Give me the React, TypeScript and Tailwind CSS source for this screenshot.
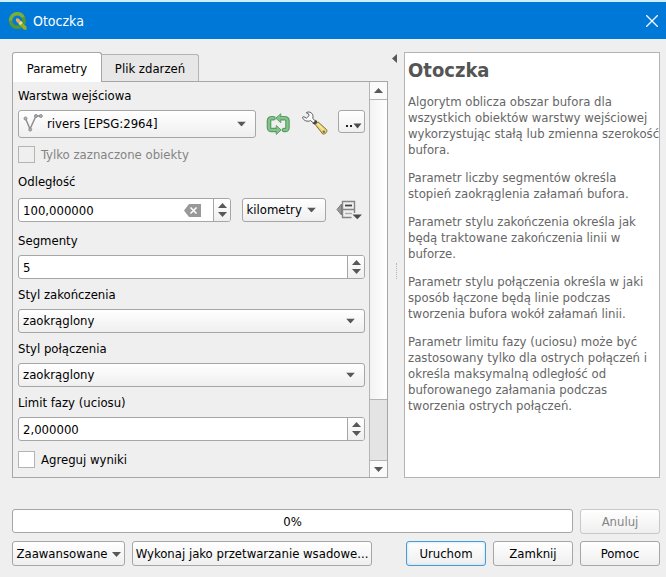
import { useState, type ReactNode } from "react";

function Triangle({ dir = "down", className = "" }: { dir?: "down" | "up" | "left"; className?: string }) {
  const points = { down: "0,0 9,0 4.5,5", up: "0,5 9,5 4.5,0", left: "5,0 5,9 0,4.5" }[dir];
  return (
    <svg
      viewBox={dir === "left" ? "0 0 5 9" : "0 0 9 5"}
      className={`fill-[#585858] ${dir === "left" ? "h-[9px] w-[5px]" : "h-[5px] w-[9px]"} ${className}`}
      aria-hidden="true"
    >
      <polygon points={points} />
    </svg>
  );
}

function QgisLogo() {
  return (
    <svg viewBox="0 0 20 20" className="size-5" aria-hidden="true">
      <circle cx="9.3" cy="9.5" r="6.8" fill="none" stroke="#589632" strokeWidth="3.6" />
      <path d="M2.5 9.5a6.8 6.8 0 0 1 6.8-6.8 6.8 6.8 0 0 1 6 3.6" fill="none" stroke="#7aae3c" strokeWidth="3.2" />
      <path d="M10.5 10.5h3.2l5.2 5.3v3.3h-3l-5.4-5.6z" fill="#93b023" stroke="#0078d7" strokeWidth=".6" />
      <path d="M8 7.6h2.6l2 2.2-2.5 2.4-2.1-2.2z" fill="#f0a85a" />
      <path d="m10.3 12.2 2.5-2.4 2 2-2.4 2.4z" fill="#e9e08a" />
    </svg>
  );
}

function LineLayerIcon() {
  return (
    <svg viewBox="0 0 20 18" className="h-[18px] w-5" fill="#b0b0b0" stroke="#8e8e8e" aria-hidden="true">
      <path d="M2.5 4.5 7 15l6-13h4.5" fill="none" strokeWidth="1.5" />
      <circle cx="2.5" cy="4.5" r="1.5" />
      <circle cx="7.2" cy="15.5" r="1.5" />
      <circle cx="13" cy="2" r="1.5" />
      <circle cx="17.8" cy="2" r="1.5" />
    </svg>
  );
}

function IterateIcon() {
  const d = "M7.5 5.2H5.500a2.500 2.500 0 0 0-2.500 2.500v7a2.300 2.300 0 0 0 2.300 2.300h6M14.500 5.200h4.500a2.500 2.500 0 0 1 2.500 2.500v7a2.300 2.300 0 0 1-2.300 2.300H18";
  return (
    <svg viewBox="0 0 25 22" className="h-[22px] w-[25px]" fill="none" strokeLinecap="round" aria-hidden="true">
      <path d={d} stroke="#5a9e64" strokeWidth="4.6" />
      <path d="m14.500 1-4.700 4.200 4.700 4.200z" fill="#84c48c" stroke="#5a9e64" />
      <path d="m10.500 12.800 4.700 4.200-4.700 4.200z" fill="#84c48c" stroke="#5a9e64" />
      <path d={d} stroke="#84c48c" strokeWidth="2.2" />
    </svg>
  );
}

function WrenchIcon() {
  return (
    <svg viewBox="0 0 27 26" className="h-[26px] w-[27px]" aria-hidden="true">
      <path
        d="M5.500 2.500c3-1.500 6.600.6 6.500 4l-.2 2 3.200 3-2 2.100-3.400-3C6.500 12 2.500 11 1.500 7.200l1.300-.6 2.500 1.600 2.900-2.700-1.200-2.200-1.500-.2z"
        fill="#fafafa"
        stroke="#5b5b5b"
      />
      <path d="m15 9.800-3.500 3.800 2.800 1.300 2.300-2.200z" fill="#444" />
      <path d="M14.200 14.500 17 11.800l8.700 8c1 2-1.700 4.900-4 4.200z" fill="#e9d372" stroke="#80703a" />
      <path d="m16.500 13.800 6.500 6.400" stroke="#f7ecac" strokeWidth="1.2" />
      <circle cx="22.8" cy="21.7" r="1.2" fill="#80703a" />
    </svg>
  );
}

function OverrideIcon() {
  return (
    <svg viewBox="0 0 26 20" className="h-5 w-[26px]" fill="none" stroke="#858585" aria-hidden="true">
      <path d="M5.500 4 1 9.500 5.500 15z" fill="#999" stroke="#777" />
      <path d="M18.500 13V1.500h-12v16h9M6.500 9.500h12" strokeWidth="1.400" />
      <path d="M9 5.500h7" stroke="#444" strokeWidth="1.800" />
      <path d="M9 13.500h7" stroke="#aaa" strokeWidth="1.400" />
      <path d="M16.500 14.500h9.500l-4.700 4.700z" fill="#4c4c4c" stroke="none" />
    </svg>
  );
}

function ClearIcon() {
  return (
    <svg viewBox="0 0 17 13" className="h-[13px] w-[17px]" aria-hidden="true">
      <path d="M5 0h12v13H5L0 6.5z" fill="#999" />
      <path d="m6.500 3.500 6 6m0-6-6 6" stroke="#fff" strokeWidth="1.6" />
    </svg>
  );
}

const frame = "rounded-[3px] border border-[#a6a6a6]";
const raised = "bg-linear-to-b from-white to-[#efefef]";

function Field({ id, label, children }: { id: string; label: string; children: ReactNode }) {
  return (
    <div className="flex flex-col gap-[5px]">
      <label htmlFor={id} className="h-5 leading-[22px]">{label}</label>
      {children}
    </div>
  );
}

function Select({ id, value, icon, className = "", inset = "px-1", label }: {
  id: string; value: string; icon?: ReactNode; className?: string; inset?: string; label?: string;
}) {
  return (
    <div className={`relative ${className}`}>
      <select id={id} aria-label={label} className={`size-full appearance-none ${frame} ${raised} ${inset}`}>
        <option>{value}</option>
      </select>
      {icon && <span className="pointer-events-none absolute top-1 left-[5px]">{icon}</span>}
      <Triangle className="pointer-events-none absolute top-1/2 right-2.5 -translate-y-1/2" />
    </div>
  );
}

function SpinBox({ id, initial, clearable, className = "" }: {
  id: string; initial: string; clearable?: boolean; className?: string;
}) {
  const [value, setValue] = useState(initial);
  return (
    <div className={`flex h-6 overflow-hidden bg-white ${frame} ${className}`}>
      <input
        id={id}
        value={value}
        onChange={(e) => setValue(e.target.value)}
        className="min-w-0 flex-1 bg-transparent px-1 pt-px outline-none"
      />
      {clearable && (
        <button aria-label="Wyczyść" className="mr-3 self-center" onClick={() => setValue("")}>
          <ClearIcon />
        </button>
      )}
      <div className={`flex w-[17px] flex-col items-center justify-center gap-1 border-l border-[#a6a6a6] ${raised}`}>
        <button aria-label="Zwiększ"><Triangle dir="up" className="block" /></button>
        <button aria-label="Zmniejsz"><Triangle className="block" /></button>
      </div>
    </div>
  );
}

function Check({ label, disabled }: { label: string; disabled?: boolean }) {
  return (
    <label className={`flex h-[17px] items-center gap-1.5 ${disabled ? "text-[#848484]" : ""}`}>
      <input
        type="checkbox"
        disabled={disabled}
        className={`size-[17px] appearance-none border border-[#b4b4b4] ${disabled ? "bg-[#efefef]" : "bg-white checked:bg-[#2d8ccf]"}`}
      />
      {label}
    </label>
  );
}

function Button({ children, className = "w-20", tone = "border-[#a6a6a6]", disabled }: {
  children: ReactNode; className?: string; tone?: string; disabled?: boolean;
}) {
  return (
    <button
      disabled={disabled}
      className={`flex h-[25px] shrink-0 items-center justify-center rounded-[3px] border pt-px whitespace-nowrap ${raised} ${tone} ${className}`}
    >
      {children}
    </button>
  );
}

const help = [
  "Algorytm oblicza obszar bufora dla wszystkich obiektów warstwy wejściowej wykorzystując stałą lub zmienna szerokość bufora.",
  "Parametr liczby segmentów określa stopień zaokrąglenia załamań bufora.",
  "Parametr stylu zakończenia określa jak będą traktowane zakończenia linii w buforze.",
  "Parametr stylu połączenia określa w jaki sposób łączone będą linie podczas tworzenia bufora wokół załamań linii.",
  "Parametr limitu fazy (uciosu) może być zastosowany tylko dla ostrych połączeń i określa maksymalną odległość od buforowanego załamania podczas tworzenia ostrych połączeń.",
];

export default function App() {
  return (
    <div className="flex min-h-screen flex-col bg-[#efefef] font-['DejaVu_Sans_Condensed','Noto_Sans',sans-serif] text-[13px] leading-[18px] text-black">
      <header className="flex h-[39px] items-center border-t-2 border-[#cdeefb] bg-[#0078d7] pr-2 pl-2 text-white">
        <QgisLogo />
        <h1 className="ml-[5px] flex-1 text-[14px]">Otoczka</h1>
        <button aria-label="Zamknij okno">
          <svg viewBox="0 0 12 12" className="size-3 stroke-white" aria-hidden="true">
            <path d="M0 0 12 12M12 0 0 12" strokeWidth="1.3" />
          </svg>
        </button>
      </header>

      <main className="grid flex-1 grid-cols-[376fr_16px_256fr] pt-[13px] pr-1.5 pl-3">
        <section className="flex min-w-0 flex-col">
          <div role="tablist" className="z-10 -mb-px flex h-[30px] items-end">
            <button role="tab" aria-selected="true" className="h-[30px] w-[90px] rounded-t-[3px] border border-b-0 border-[#a6a6a6] bg-white pt-0.5">
              Parametry
            </button>
            <button role="tab" aria-selected="false" className="h-7 w-[97px] rounded-tr-[3px] border border-l-0 border-[#b4b4b4] border-b-[#a6a6a6] bg-[#e7e7e7] pt-0.5">
              Plik zdarzeń
            </button>
          </div>

          <div role="tabpanel" className="flex flex-1 border border-[#a6a6a6]">
            <form className="min-w-0 flex-1 pt-1 pr-1 pl-[5px]" onSubmit={(e) => e.preventDefault()}>
              <label htmlFor="layer" className="block h-5 leading-5">Warstwa wejściowa</label>
              <div className="mt-1 flex items-start justify-between">
                <Select id="layer" value="rivers [EPSG:2964]" icon={<LineLayerIcon />} inset="pl-7" className="h-7 w-[238px]" />
                <button aria-label="Iteruj po obiektach" className="mt-[3px]"><IterateIcon /></button>
                <button aria-label="Opcje zaawansowane"><WrenchIcon /></button>
                <button aria-label="Wybierz źródło" className={`flex h-[23px] w-[27px] items-end justify-end pr-0.5 pb-[3px] ${frame} ${raised}`}>
                  <svg viewBox="0 0 17 6" className="h-1.5 w-[17px]" aria-hidden="true">
                    <path d="M1 2h2v2H1zM5 2h2v2H5z" fill="#222" />
                    <path d="M8.500 .5h8L12.500 5.500z" fill="#4c4c4c" />
                  </svg>
                </button>
              </div>
              <div className="mt-2"><Check label="Tylko zaznaczone obiekty" disabled /></div>

              <label htmlFor="distance" className="mt-2 block h-5 leading-[22px]">Odległość</label>
              <div className="mt-[7px] flex items-center justify-between">
                <SpinBox id="distance" initial="100,000000" clearable className="w-[213px]" />
                <Select id="unit" label="Jednostka" value="kilometry" className="h-6 w-[84px]" />
                <button aria-label="Nadpisanie danymi" className="mr-[3px]"><OverrideIcon /></button>
              </div>

              <div className="mt-2 flex flex-col gap-[5px]">
                <Field id="segments" label="Segmenty"><SpinBox id="segments" initial="5" /></Field>
                <Field id="cap" label="Styl zakończenia"><Select id="cap" value="zaokrąglony" className="h-6" /></Field>
                <Field id="join" label="Styl połączenia"><Select id="join" value="zaokrąglony" className="h-6" /></Field>
                <Field id="miter" label="Limit fazy (uciosu)"><SpinBox id="miter" initial="2,000000" /></Field>
              </div>
              <div className="mt-2.5 mb-[9px]"><Check label="Agreguj wyniki" /></div>
            </form>

            <div className="flex w-[18px] shrink-0 flex-col border-l border-[#b4b4b4] bg-[#e4e4e4]">
              <button aria-label="Przewiń w górę" className="flex h-[18px] items-center justify-center border-b border-[#b4b4b4] bg-[#fafafa]">
                <Triangle dir="up" />
              </button>
              <div className="grow-[5] border-b border-[#b4b4b4] bg-linear-to-r from-[#f3f3f3] to-white" />
              <div className="grow" />
              <button aria-label="Przewiń w dół" className="flex h-[17px] items-center justify-center border-t border-[#b4b4b4] bg-[#fafafa]">
                <Triangle />
              </button>
            </div>
          </div>
        </section>

        <div className="flex flex-col items-center">
          <button aria-label="Zwiń pomoc" className="mt-0.5 mr-1"><Triangle dir="left" className="block" /></button>
          <div className="my-auto h-4 border-l border-dotted border-[#b4b4b4]" />
        </div>

        <aside className="min-w-0 border border-[#b4b4b4] bg-white pt-1 pl-[3px] leading-4 text-[#666]">
          <h2 className="text-[20px] leading-[26px] font-bold text-[#555]">Otoczka</h2>
          <div className="mt-[11px] -mr-0.5 flex flex-col gap-3">
            {help.map((p) => <p key={p}>{p}</p>)}
          </div>
        </aside>
      </main>

      <footer className="flex flex-col gap-[7px] pt-[31px] pr-1.5 pb-[11px] pl-3">
        <div className="flex gap-[7px]">
          <div role="progressbar" aria-valuenow={0} className={`flex h-6 flex-1 items-center justify-center bg-white pt-px ${frame}`}>0%</div>
          <Button disabled tone="border-[#c8c8c8] text-[#848484]">Anuluj</Button>
        </div>
        <div className="flex gap-[7px]">
          <Button className="w-[113px] gap-1">Zaawansowane <Triangle /></Button>
          <Button className="w-60">Wykonaj jako przetwarzanie wsadowe...</Button>
          <div className="ml-auto flex gap-[7px]">
            <Button tone="border-[#4a9bd4] shadow-[inset_0_0_3px_#b5ddf5]">Uruchom</Button>
            <Button>Zamknij</Button>
            <Button>Pomoc</Button>
          </div>
        </div>
      </footer>
    </div>
  );
}
